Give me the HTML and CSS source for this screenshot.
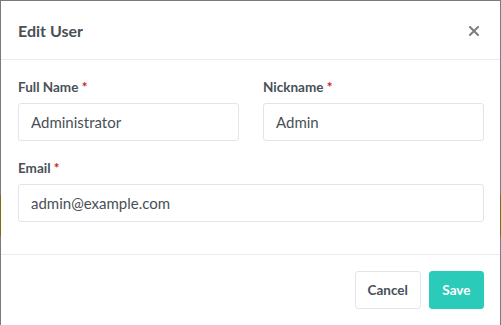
FILE: index.html
```html
<!DOCTYPE html>
<html lang="en">
<head>
    <meta charset="UTF-8">
    <meta name="viewport" content="width=device-width, initial-scale=1.0">
    <title>Edit User</title>
    <link rel="stylesheet" href="styles.css">
</head>
<body>
    <div class="modal">
        <div class="modal-header">
            <h5 class="modal-title">Edit User</h5>
            <button class="close" aria-label="Close">
                <svg width="10" height="10" viewBox="0 0 10 10">
                    <path d="M1 1 L9 9 M9 1 L1 9" stroke="#7a7f86" stroke-width="2" stroke-linecap="square"/>
                </svg>
            </button>
        </div>

        <div class="modal-body">
            <div class="row">
                <div class="form-group">
                    <label class="form-label">Full Name <span class="required">*</span></label>
                    <input class="form-control" type="text" value="Administrator">
                </div>
                <div class="form-group">
                    <label class="form-label">Nickname <span class="required">*</span></label>
                    <input class="form-control" type="text" value="Admin">
                </div>
            </div>
            <div class="form-group">
                <label class="form-label">Email <span class="required">*</span></label>
                <input class="form-control" type="email" value="admin@example.com">
            </div>
        </div>

        <div class="modal-footer">
            <button class="btn btn-secondary">Cancel</button>
            <button class="btn btn-teal">Save</button>
        </div>
    </div>
</body>
</html>
```

FILE: styles.css
```css
body {
    font-family: Lato, "Open Sans", sans-serif;
    margin: 0;
    padding: 1px 1px 0 1px;
    height: 325px;
    box-sizing: border-box;
    overflow: hidden;
    background: linear-gradient(to bottom, #7b7b7b 0, #7b7b7b 195px, #7d6c12 195px, #7d6c12 236px, #7b7b7b 236px);
    color: #495057;
}
.modal {
    background-color: white;
    height: 100%;
}
.modal-header {
    display: flex;
    align-items: center;
    justify-content: space-between;
    height: 58px;
    padding: 0 21px 0 17px;
    border-bottom: 1px solid #e9ecef;
}
.modal-title {
    margin: 0;
    font-size: 16px;
    font-weight: 700;
    color: #495057;
}
.close {
    border: none;
    background: none;
    padding: 0;
    margin-top: 2px;
    display: flex;
    cursor: pointer;
}
.modal-body {
    padding: 17px 16px 15px 17px;
}
.row {
    display: grid;
    grid-template-columns: 1fr 1fr;
    column-gap: 24px;
}
.form-group {
    margin-bottom: 17px;
}
.form-label {
    display: block;
    font-size: 13.5px;
    font-weight: 700;
    line-height: 20px;
    margin-bottom: 6px;
}
.required {
    color: #cd201f;
}
.form-control {
    display: block;
    width: 100%;
    box-sizing: border-box;
    height: 38px;
    padding: 0 12px;
    font-family: Lato, "Open Sans", sans-serif;
    font-size: 15px;
    color: #495057;
    background-color: white;
    border: 1px solid #e0e5ec;
    border-radius: 3px;
}
.modal-footer {
    display: flex;
    justify-content: flex-end;
    gap: 8px;
    padding: 16px 16px 16px 17px;
    border-top: 1px solid #e9ecef;
}
.btn {
    height: 38px;
    padding: 0 12px;
    font-family: Lato, "Open Sans", sans-serif;
    font-size: 13.5px;
    font-weight: 700;
    border-radius: 3px;
    cursor: pointer;
}
.btn-secondary {
    color: #495057;
    background-color: white;
    border: 1px solid #e0e5ec;
}
.btn-teal {
    padding: 0 12.5px;
    color: white;
    background-color: #2bcbba;
    border: 1px solid #2bcbba;
}
```
